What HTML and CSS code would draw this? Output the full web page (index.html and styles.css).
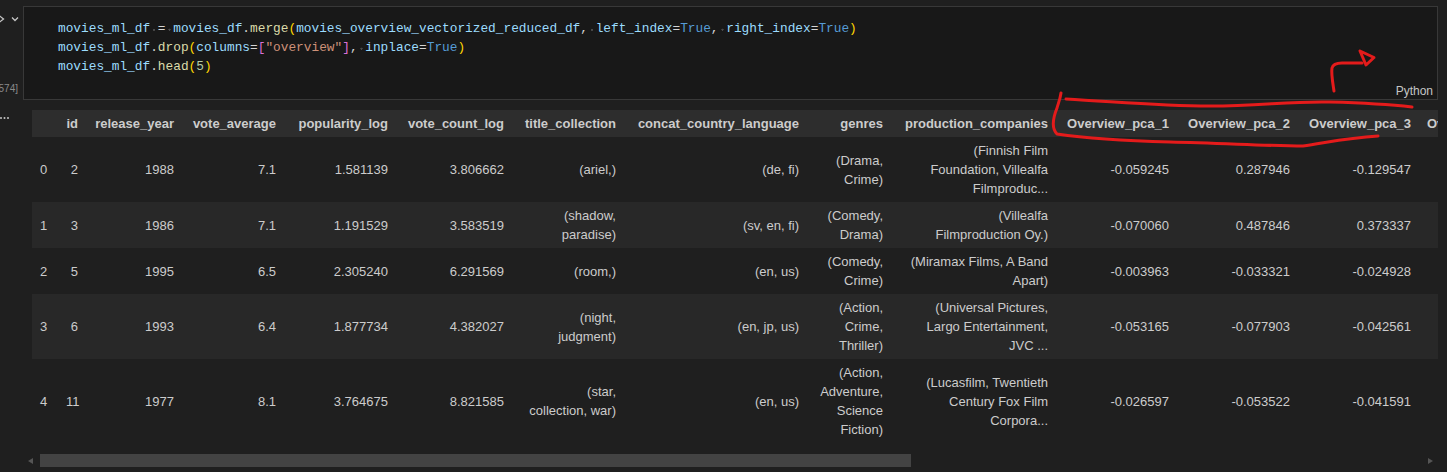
FILE: index.html
```html
<!DOCTYPE html>
<html lang="en">
<head>
<meta charset="utf-8">
<title>movies_ml_df</title>
<link rel="stylesheet" href="styles.css">
</head>
<body>
<div class="cell-row">
  <div class="gutter">
    <svg class="gutter-icons" width="23" height="10" viewBox="0 0 23 10">
      <path d="M-1 1.5 L3.5 5 L-1 8.5" />
      <path d="M12 3.5 L15 6.5 L18 3.5" />
    </svg>
    <div class="exec-count">[574]</div>
  </div>
  <div class="cell">
<pre class="code"><span class="v">movies_ml_df</span><span class="ws"> </span>=<span class="ws"> </span><span class="v">movies_df</span>.<span class="f">merge</span><span class="b1">(</span><span class="v">movies_overview_vectorized_reduced_df</span>,<span class="ws"> </span><span class="v">left_index</span>=<span class="k">True</span>,<span class="ws"> </span><span class="v">right_index</span>=<span class="k">True</span><span class="b1">)</span>
<span class="v">movies_ml_df</span>.<span class="f">drop</span><span class="b1">(</span><span class="v">columns</span>=<span class="b2">[</span><span class="s">"overview"</span><span class="b2">]</span>,<span class="ws"> </span><span class="v">inplace</span>=<span class="k">True</span><span class="b1">)</span>
<span class="v">movies_ml_df</span>.<span class="f">head</span><span class="b1">(</span><span class="n">5</span><span class="b1">)</span></pre>
    <div class="lang">Python</div>
  </div>
</div>

<div class="output-row">
  <div class="out-gutter">
    <svg class="more" width="10" height="4" viewBox="0 0 10 4">
      <circle cx="1" cy="2" r="1"/>
      <circle cx="4.5" cy="2" r="1"/>
      <circle cx="8" cy="2" r="1"/>
    </svg>
  </div>
  <div class="out-main">
    <div class="table-wrap">
      <table class="df">
        <colgroup>
          <col class="c-idx"><col class="c-id"><col class="c-year"><col class="c-va"><col class="c-pop"><col class="c-vc"><col class="c-title"><col class="c-lang"><col class="c-gen"><col class="c-prod"><col class="c-pca"><col class="c-pca"><col class="c-pca"><col class="c-pca">
        </colgroup>
        <thead>
          <tr>
            <th></th><th>id</th><th>release_year</th><th>vote_average</th><th>popularity_log</th><th>vote_count_log</th><th>title_collection</th><th>concat_country_language</th><th>genres</th><th>production_companies</th><th>Overview_pca_1</th><th>Overview_pca_2</th><th>Overview_pca_3</th><th class="cut">Overview_pca_4</th>
          </tr>
        </thead>
        <tbody>
          <tr>
            <th>0</th><td>2</td><td>1988</td><td>7.1</td><td>1.581139</td><td>3.806662</td><td>(ariel,)</td><td>(de, fi)</td><td>(Drama,<br>Crime)</td><td>(Finnish Film<br>Foundation, Villealfa<br>Filmproduc...</td><td>-0.059245</td><td>0.287946</td><td>-0.129547</td><td></td>
          </tr>
          <tr>
            <th>1</th><td>3</td><td>1986</td><td>7.1</td><td>1.191529</td><td>3.583519</td><td>(shadow,<br>paradise)</td><td>(sv, en, fi)</td><td>(Comedy,<br>Drama)</td><td>(Villealfa<br>Filmproduction Oy.)</td><td>-0.070060</td><td>0.487846</td><td>0.373337</td><td></td>
          </tr>
          <tr>
            <th>2</th><td>5</td><td>1995</td><td>6.5</td><td>2.305240</td><td>6.291569</td><td>(room,)</td><td>(en, us)</td><td>(Comedy,<br>Crime)</td><td>(Miramax Films, A Band<br>Apart)</td><td>-0.003963</td><td>-0.033321</td><td>-0.024928</td><td></td>
          </tr>
          <tr>
            <th>3</th><td>6</td><td>1993</td><td>6.4</td><td>1.877734</td><td>4.382027</td><td>(night,<br>judgment)</td><td>(en, jp, us)</td><td>(Action,<br>Crime,<br>Thriller)</td><td>(Universal Pictures,<br>Largo Entertainment,<br>JVC ...</td><td>-0.053165</td><td>-0.077903</td><td>-0.042561</td><td></td>
          </tr>
          <tr>
            <th>4</th><td>11</td><td>1977</td><td>8.1</td><td>3.764675</td><td>8.821585</td><td>(star,<br>collection, war)</td><td>(en, us)</td><td>(Action,<br>Adventure,<br>Science<br>Fiction)</td><td>(Lucasfilm, Twentieth<br>Century Fox Film<br>Corpora...</td><td>-0.026597</td><td>-0.053522</td><td>-0.041591</td><td></td>
          </tr>
        </tbody>
      </table>
    </div>
    <div class="hscroll">
      <div class="arrow arrow-l"></div>
      <div class="track"><div class="thumb"></div></div>
      <div class="arrow arrow-r"></div>
    </div>
  </div>
</div>

<svg class="marks" width="1447" height="472" viewBox="0 0 1447 472">
  <path d="M1066 99 C1120 102 1160 106 1210 106 C1260 106 1290 101 1330 102 C1370 103 1395 105 1412 107"/>
  <path d="M1061 93 C1060 100 1058 104 1057 108 C1053 118 1051 128 1057 134 C1090 139 1130 141 1170 142 C1220 143 1270 146 1303 146 C1325 143 1345 138 1378 136"/>
  <path d="M1334 91 C1333 84 1331 74 1332 68 C1333 64 1336 63 1342 63 L1362 63"/>
  <path d="M1360 51 L1374 57.5 L1366 65 Z"/>
</svg>
</body>
</html>
```

FILE: styles.css
```css
html, body {
  margin: 0;
  padding: 0;
}

body {
  position: relative;
  width: 1447px;
  height: 472px;
  overflow: hidden;
  background: #1f1f1f;
  color: #cccccc;
  font-family: "Liberation Sans", Arial, sans-serif;
}

/* ---------- code cell ---------- */
.cell-row {
  display: flex;
  padding-top: 6px;
}

.gutter {
  width: 23px;
  flex: none;
  height: 94px;
  display: flex;
  flex-direction: column;
  justify-content: space-between;
}

.gutter-icons {
  display: block;
  margin-top: 8px;
  overflow: visible;
  fill: none;
  stroke: #c5c5c5;
  stroke-width: 1.3;
}

.exec-count {
  display: flex;
  justify-content: flex-end;
  padding-right: 5px;
  margin-bottom: 5px;
  font-size: 10px;
  line-height: 12px;
  color: #8a8a8a;
  white-space: nowrap;
}

.cell {
  flex: 1;
  margin-right: 9px;
  height: 94px;
  box-sizing: border-box;
  border: 1px solid #383838;
  background: #181818;
  padding: 12px 4px 1px 34px;
  display: flex;
  flex-direction: column;
}

.code {
  margin: 0;
  font-family: "Liberation Mono", "DejaVu Sans Mono", monospace;
  font-size: 12.8px;
  line-height: 19px;
  color: #d4d4d4;
  white-space: pre;
}

.code .v { color: #9cdcfe; }
.code .f { color: #dcdcaa; }
.code .k { color: #569cd6; }
.code .s { color: #ce9178; }
.code .n { color: #b5cea8; }
.code .b1 { color: #ffd700; }
.code .b2 { color: #da70d6; }
.code .ws {
  background: radial-gradient(circle at 50% 58%, #4a4a4a 0, #4a4a4a 0.9px, transparent 1.3px);
}

.lang {
  margin-top: auto;
  align-self: flex-end;
  font-size: 12px;
  line-height: 14px;
  color: #c5c5c5;
}

/* ---------- output ---------- */
.output-row {
  display: flex;
  margin-top: 10px;
}

.out-gutter {
  width: 24px;
  flex: none;
}

.more {
  display: block;
  margin-top: 6px;
  fill: #c5c5c5;
}

.out-main {
  width: 1414px;
}

.table-wrap {
  margin-left: 8px;
  overflow: hidden;
}

.df {
  border-collapse: collapse;
  border-spacing: 0;
  table-layout: fixed;
  width: 1507px;
  font-size: 13px;
  line-height: 19px;
  color: #cccccc;
}

.df th,
.df td {
  padding: 4px 8px;
  text-align: right;
  vertical-align: middle;
  white-space: nowrap;
  border: none;
}

.df thead th {
  background: #2d2d2d;
  font-weight: bold;
}

.df thead th.cut {
  text-align: left;
}

.df tbody th {
  font-weight: normal;
  text-align: left;
}

.df tbody tr:nth-child(even) {
  background: #282828;
}

.c-idx { width: 26px; }
.c-id { width: 28px; }
.c-year { width: 96px; }
.c-va { width: 102px; }
.c-pop { width: 112px; }
.c-vc { width: 116px; }
.c-title { width: 112px; }
.c-lang { width: 183px; }
.c-gen { width: 84px; }
.c-prod { width: 165px; }
.c-pca { width: 121px; }

/* ---------- horizontal scrollbar ---------- */
.hscroll {
  display: flex;
  align-items: center;
  width: 1413px;
  height: 13px;
  margin-top: 11px;
}

.arrow {
  width: 13px;
  height: 13px;
  flex: none;
  display: flex;
  align-items: center;
  justify-content: center;
}

.arrow::before {
  content: "";
  width: 0;
  height: 0;
  border-top: 3.5px solid transparent;
  border-bottom: 3.5px solid transparent;
}

.arrow-l::before {
  border-right: 5px solid #555555;
}

.arrow-r::before {
  border-left: 5px solid #555555;
}

.track {
  flex: 1;
  height: 13px;
}

.thumb {
  margin-left: 3px;
  width: 871px;
  height: 13px;
  background: #434343;
}

/* ---------- red annotation ---------- */
.marks {
  position: absolute;
  left: 0;
  top: 0;
  pointer-events: none;
  fill: none;
  stroke: #e41b1b;
  stroke-width: 3;
  stroke-linecap: round;
  stroke-linejoin: round;
}
```
